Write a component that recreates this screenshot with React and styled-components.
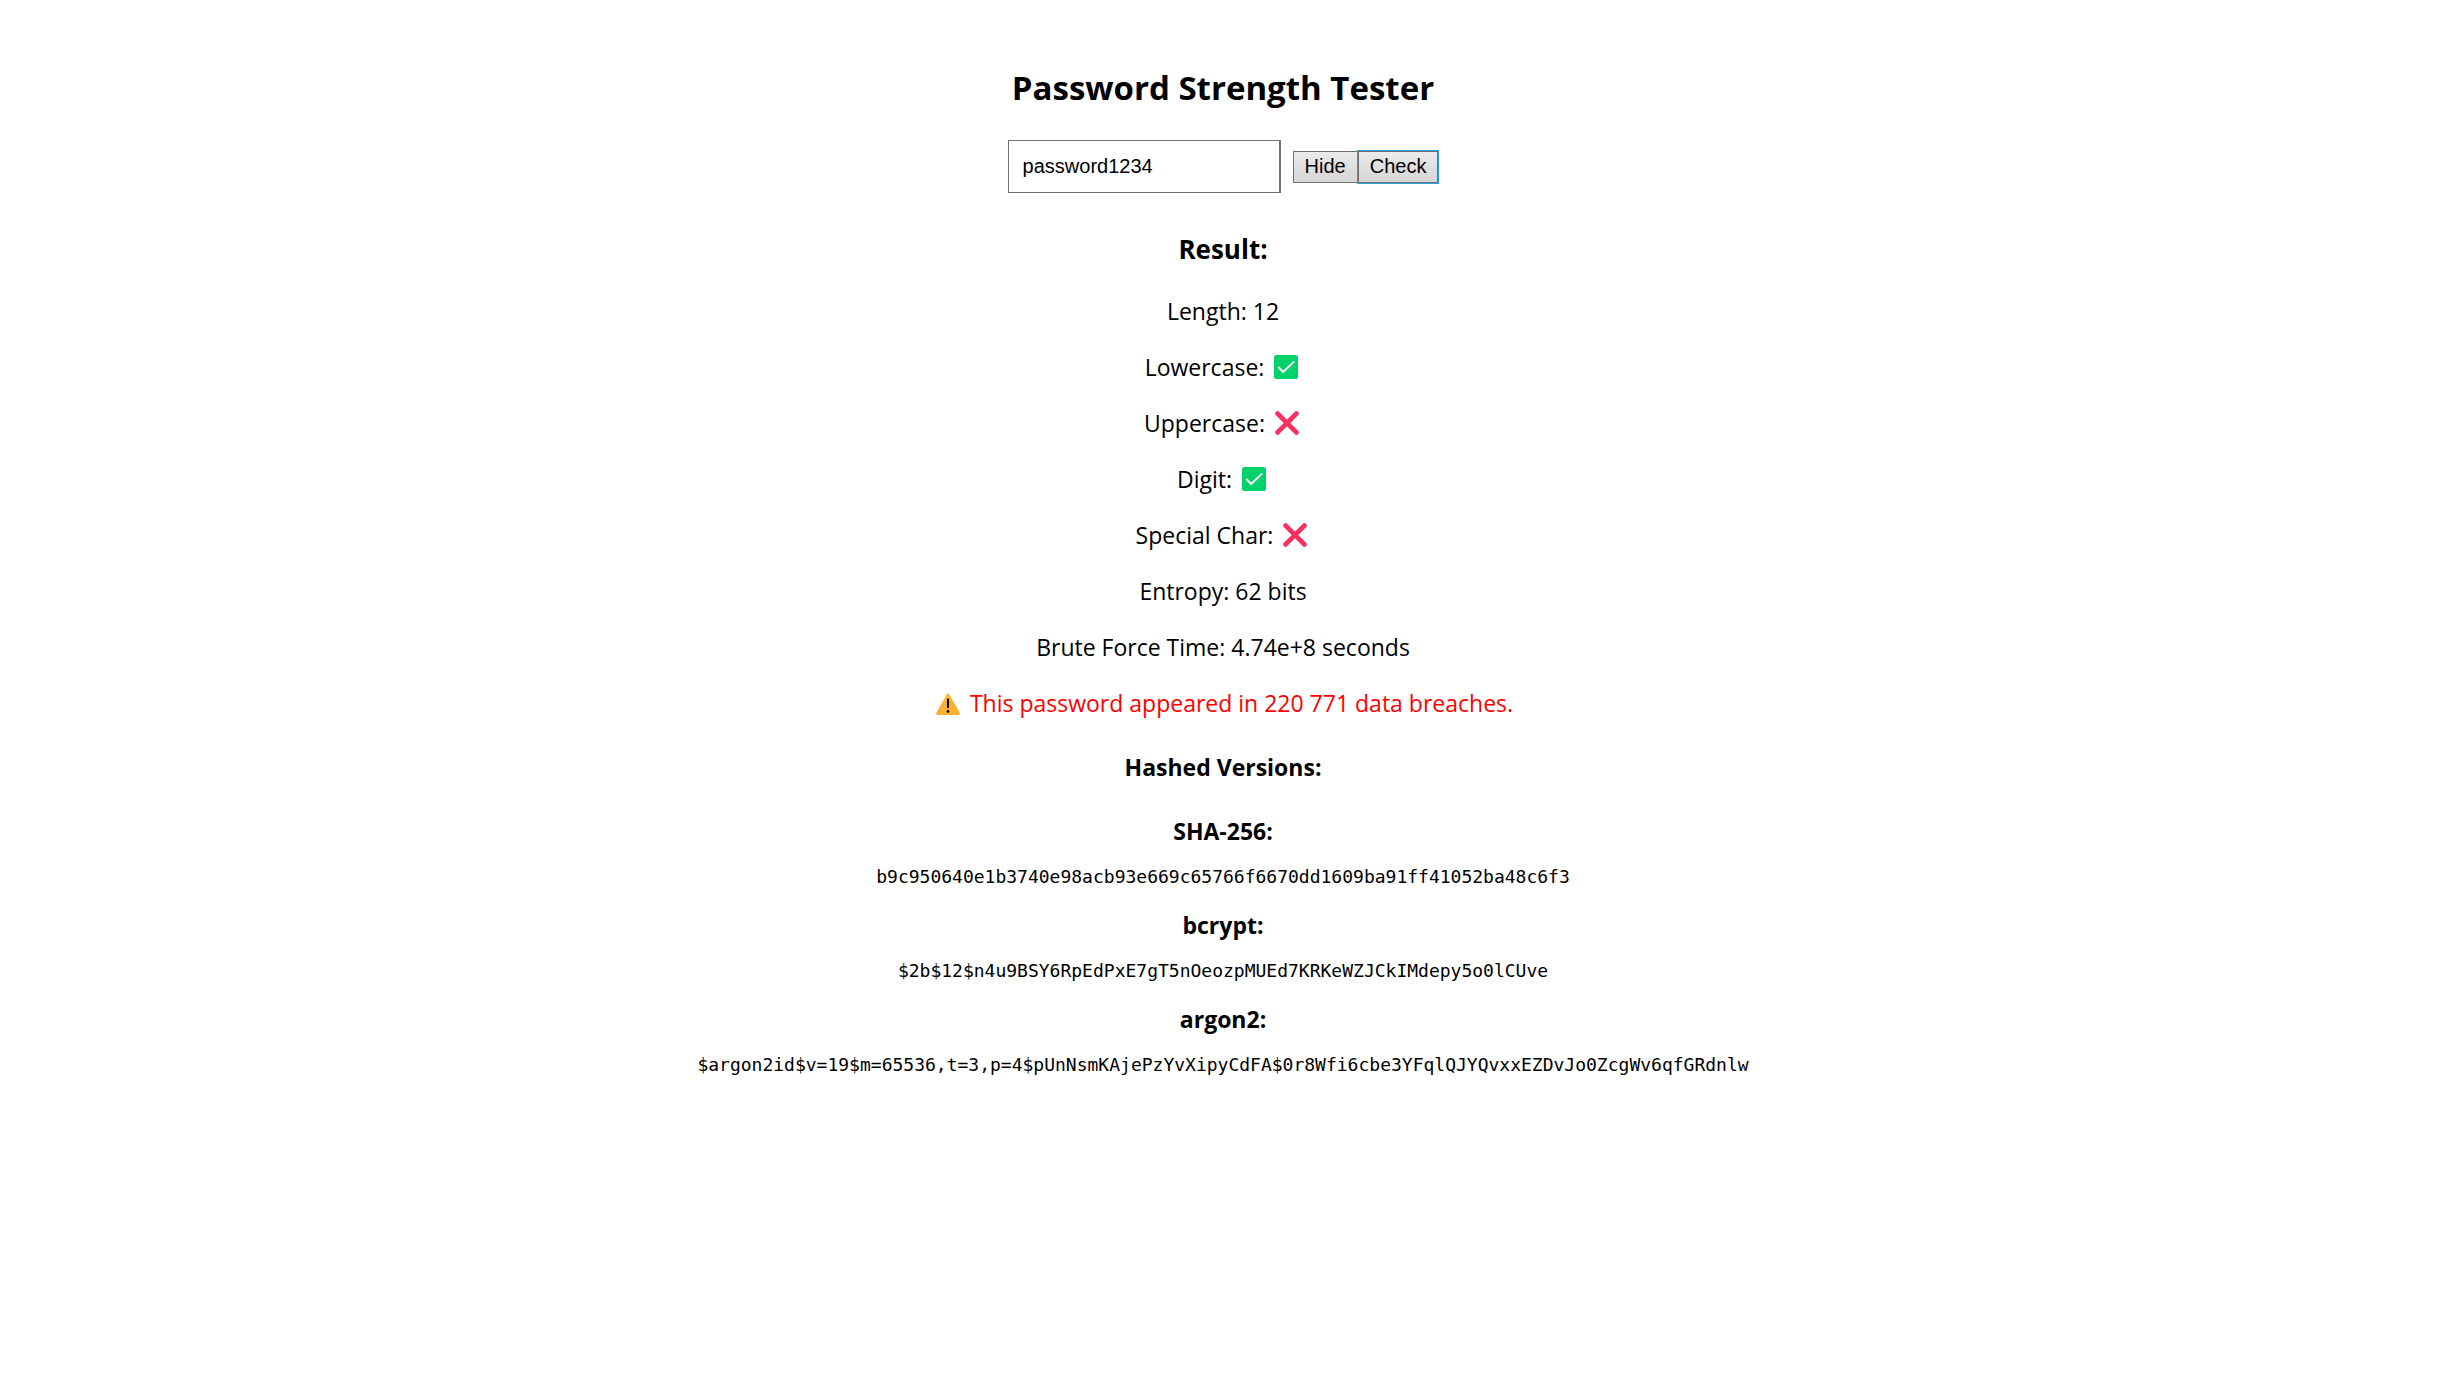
import React, { useState } from 'react';
import styled, { createGlobalStyle } from 'styled-components';

const GlobalStyle = createGlobalStyle`
  body {
    margin: 0;
    background: #fff;
    color: #000;
    font-family: 'Segoe UI', 'Open Sans', 'Noto Sans', sans-serif;
    font-size: 23px;
    line-height: 32px;
  }
`;

const Page = styled.main`
  display: flex;
  flex-direction: column;
  align-items: center;
  padding: 64px 27px 64px 24px;
  text-align: center;
`;

const Title = styled.h2`
  margin: 0 0 28px;
  font-size: 33px;
  line-height: 48px;
`;

const Form = styled.form`
  display: flex;
  align-items: center;
  margin-bottom: 38px;
`;

const PasswordInput = styled.input`
  box-sizing: border-box;
  width: 273px;
  height: 53px;
  margin-right: 12px;
  padding: 0 14px;
  border: 1px solid #707070;
  border-right-width: 2px;
  border-radius: 0;
  outline: none;
  background: #fff;
  color: #000;
  font: 20px 'Liberation Sans', Arial, sans-serif;
`;

const Button = styled.button`
  height: 32px;
  padding: 0 11px;
  border: 1px solid #707070;
  border-radius: 0;
  background: linear-gradient(#ebebeb, #d5d5d5);
  box-shadow: ${(p) => (p.$active ? '0 0 0 1px #26a0da' : 'none')};
  color: #000;
  font: 20px 'Liberation Sans', Arial, sans-serif;
`;

const ResultTitle = styled.h3`
  margin: 0 0 28px;
  font-size: 26px;
  line-height: 36px;
`;

const Line = styled.p`
  display: flex;
  align-items: center;
  gap: 10px;
  margin: 0 0 24px;
  color: ${(p) => (p.$danger ? '#f00' : 'inherit')};
`;

const Icon = styled.svg`
  width: 24px;
  height: 24px;
  flex: none;
  margin: ${(p) => (p.$leading ? '0 0 0 3px' : '0 3px 0 0')};
`;

const HashesTitle = styled.h4`
  margin: 8px 0 32px;
  font-size: 23px;
`;

const HashBlock = styled.section`
  margin-bottom: 20px;
`;

const HashName = styled.h4`
  margin: 0 0 18px;
  font-size: 23px;
`;

const Hash = styled.code`
  display: block;
  font-family: Consolas, 'DejaVu Sans Mono', monospace;
  font-size: 18px;
  line-height: 24px;
  overflow-wrap: anywhere;
`;

const CheckIcon = () => (
  <Icon viewBox="0 0 24 24" role="img" aria-label="yes">
    <rect width="24" height="24" rx="2.5" fill="#00d26a" />
    <path d="M4.8 12.4 9.2 17 19.6 6.9" fill="none" stroke="#f4f4f4" strokeWidth="2.1" strokeLinecap="round" strokeLinejoin="round" />
  </Icon>
);

const CrossIcon = () => (
  <Icon viewBox="0 0 24 24" role="img" aria-label="no">
    <path d="M2.6 2.6 21.4 21.4M21.4 2.6 2.6 21.4" fill="none" stroke="#f92f60" strokeWidth="4.8" strokeLinecap="round" />
  </Icon>
);

const WarningIcon = () => (
  <Icon $leading viewBox="0 0 24 24" role="img" aria-label="warning">
    <path d="M10.7 3.6Q12 1.6 13.3 3.6L23.6 21.4Q24.5 24 22.3 24H1.7Q-.5 24 .4 21.4Z" fill="#ffb02e" />
    <path d="M12 8.6v7.6" stroke="#000" strokeWidth="2.1" strokeLinecap="round" />
    <circle cx="12" cy="20.4" r="1.3" />
  </Icon>
);

const checks = [
  ['Lowercase:', true],
  ['Uppercase:', false],
  ['Digit:', true],
  ['Special Char:', false],
];

const hashes = [
  ['SHA-256:', 'b9c950640e1b3740e98acb93e669c65766f6670dd1609ba91ff41052ba48c6f3'],
  ['bcrypt:', '$2b$12$n4u9BSY6RpEdPxE7gT5nOeozpMUEd7KRKeWZJCkIMdepy5o0lCUve'],
  ['argon2:', '$argon2id$v=19$m=65536,t=3,p=4$pUnNsmKAjePzYvXipyCdFA$0r8Wfi6cbe3YFqlQJYQvxxEZDvJo0ZcgWv6qfGRdnlw'],
];

export default function App() {
  const [password, setPassword] = useState('password1234');
  const [visible, setVisible] = useState(true);

  return (
    <>
      <GlobalStyle />
      <Page>
        <Title>Password Strength Tester</Title>
        <Form onSubmit={(e) => e.preventDefault()}>
          <PasswordInput
            aria-label="Password"
            type={visible ? 'text' : 'password'}
            value={password}
            onChange={(e) => setPassword(e.target.value)}
          />
          <Button type="button" onClick={() => setVisible(!visible)}>
            {visible ? 'Hide' : 'Show'}
          </Button>
          <Button type="submit" $active>Check</Button>
        </Form>

        <ResultTitle>Result:</ResultTitle>
        <Line>Length: 12</Line>
        {checks.map(([label, ok]) => (
          <Line key={label}>
            {label}
            {ok ? <CheckIcon /> : <CrossIcon />}
          </Line>
        ))}
        <Line>Entropy: 62 bits</Line>
        <Line>Brute Force Time: 4.74e+8 seconds</Line>
        <Line $danger>
          <WarningIcon />
          This password appeared in 220 771 data breaches.
        </Line>

        <HashesTitle>Hashed Versions:</HashesTitle>
        {hashes.map(([name, value]) => (
          <HashBlock key={name}>
            <HashName>{name}</HashName>
            <Hash>{value}</Hash>
          </HashBlock>
        ))}
      </Page>
    </>
  );
}
